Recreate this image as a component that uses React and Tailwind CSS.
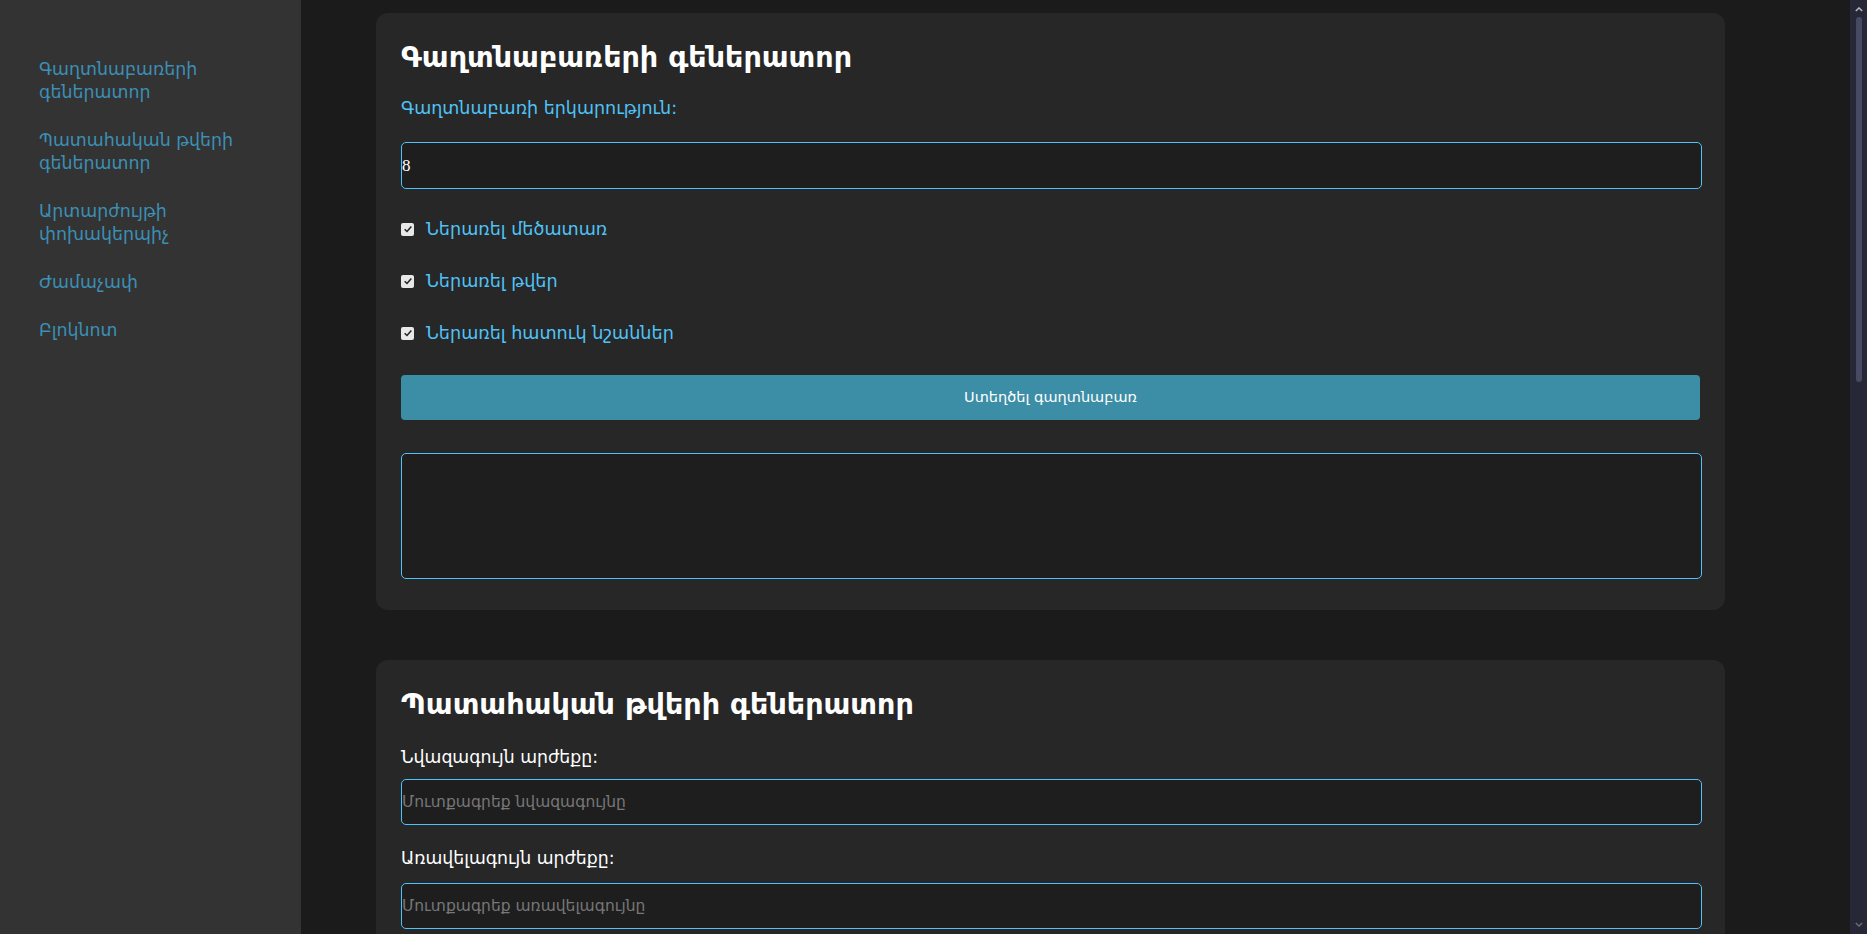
import { useState } from "react";

const font = { fontFamily: '"DejaVu Sans", "Noto Sans", sans-serif' };

const links = [
  "Գաղտնաբառերի գեներատոր",
  "Պատահական թվերի գեներատոր",
  "Արտարժույթի փոխակերպիչ",
  "Ժամաչափ",
  "Բլոկնոտ",
];

function Check({ label, checked, onChange }) {
  return (
    <label className="flex items-center h-6 cursor-pointer text-[#4fc3f7] text-[17.6px]">
      <span className="w-[13px] h-[13px] bg-[#e8e8e8] rounded-[2px] flex items-center justify-center mr-[12px]">
        {checked && (
          <svg viewBox="0 0 12 12" className="w-[10px] h-[10px]">
            <path d="M2 6.2 L4.8 9 L10 3" fill="none" stroke="#222" strokeWidth="1.8" />
          </svg>
        )}
      </span>
      <input type="checkbox" className="hidden" checked={checked} onChange={onChange} />
      <span>{label}</span>
    </label>
  );
}

// page scrollbar as drawn by the browser in dark mode
function Scrollbar() {
  return (
    <div className="w-[17px] shrink-0 bg-[#262837] flex flex-col items-center">
      <svg viewBox="0 0 10 6" className="w-[8px] h-[5px] mt-[7px]">
        <path d="M1 5 L5 1 L9 5" fill="none" stroke="#b8b8c0" strokeWidth="1.8" />
      </svg>
      <div className="w-[6px] h-[365px] mt-[5px] rounded-full bg-[#474a62]" />
      <div className="flex-1" />
      <svg viewBox="0 0 10 6" className="w-[8px] h-[5px] mb-[7px]">
        <path d="M1 1 L5 5 L9 1" fill="none" stroke="#6a6a72" strokeWidth="1.8" />
      </svg>
    </div>
  );
}

export default function App() {
  const [len, setLen] = useState("8");
  const [upper, setUpper] = useState(true);
  const [digits, setDigits] = useState(true);
  const [special, setSpecial] = useState(true);

  const inputCls =
    "block w-full h-[46px] bg-[#1e1e1e] border border-[#4fc3f7] rounded-[5px] text-white text-[15.5px] placeholder:text-[#777] outline-none [appearance:textfield]";

  return (
    <div className="flex h-screen w-full overflow-hidden bg-[#1b1b1b]" style={font}>
      {/* Sidebar */}
      <aside className="w-[301px] shrink-0 bg-[#333333] px-[39px] pt-[58px]">
        <nav className="flex flex-col gap-[25px]">
          {links.map((l) => (
            <a key={l} href="#" className="text-[17.4px] leading-[23px] text-[#3c8fb5]">
              {l}
            </a>
          ))}
        </nav>
      </aside>

      {/* Main */}
      <main className="flex-1 overflow-y-auto [scrollbar-width:none] pl-[75px] pt-[13px] pb-[50px]">
        <section className="w-[1349px] bg-[#272727] rounded-[12px] pl-[25px] pr-[23px] pt-[24px] pb-[31px]">
          <h2 className="text-[28.6px] leading-[40px] font-bold text-white">Գաղտնաբառերի գեներատոր</h2>
          <div className="mt-[19px] text-[17.5px] leading-6 text-[#4fc3f7]">Գաղտնաբառի երկարություն:</div>
          <input
            type="number"
            value={len}
            onChange={(e) => setLen(e.target.value)}
            className="mt-[22px] block w-full h-[47px] bg-[#1e1e1e] border border-[#4fc3f7] rounded-[5px] text-white text-[17px] outline-none [appearance:textfield]"
            style={{ fontFamily: '"Liberation Serif", "DejaVu Sans", serif' }}
          />
          <div className="mt-[28px]">
            <Check label="Ներառել մեծատառ" checked={upper} onChange={() => setUpper(!upper)} />
          </div>
          <div className="mt-[28px]">
            <Check label="Ներառել թվեր" checked={digits} onChange={() => setDigits(!digits)} />
          </div>
          <div className="mt-[28px]">
            <Check label="Ներառել հատուկ նշաններ" checked={special} onChange={() => setSpecial(!special)} />
          </div>
          <button className="mt-[30px] block w-[calc(100%-2px)] h-[45px] bg-[#3c8ea6] rounded-[4px] text-white text-[14.5px]">
            Ստեղծել գաղտնաբառ
          </button>
          <textarea
            readOnly
            className="mt-[33px] block w-full h-[126px] bg-[#1e1e1e] border border-[#4fc3f7] rounded-[5px] text-white outline-none resize-none"
          />
        </section>

        <section className="mt-[50px] w-[1349px] bg-[#272727] rounded-[12px] pl-[25px] pr-[23px] pt-[24px] pb-[31px]">
          <h2 className="text-[28.6px] leading-[40px] font-bold text-white">Պատահական թվերի գեներատոր</h2>
          <div className="mt-[21px] text-[17.3px] leading-6 text-white">Նվազագույն արժեքը:</div>
          <input type="number" placeholder="Մուտքագրեք նվազագույնը" className={`mt-[10px] ${inputCls}`} />
          <div className="mt-[21px] text-[17.3px] leading-6 text-white">Առավելագույն արժեքը:</div>
          <input type="number" placeholder="Մուտքագրեք առավելագույնը" className={`mt-[13px] ${inputCls}`} />
          <button className="mt-[30px] block w-[calc(100%-2px)] h-[45px] bg-[#3c8ea6] rounded-[4px] text-white text-[14.5px]">
            Ստեղծել թիվ
          </button>
          <textarea
            readOnly
            className="mt-[33px] block w-full h-[126px] bg-[#1e1e1e] border border-[#4fc3f7] rounded-[5px] text-white outline-none resize-none"
          />
        </section>
      </main>

      <Scrollbar />
    </div>
  );
}
